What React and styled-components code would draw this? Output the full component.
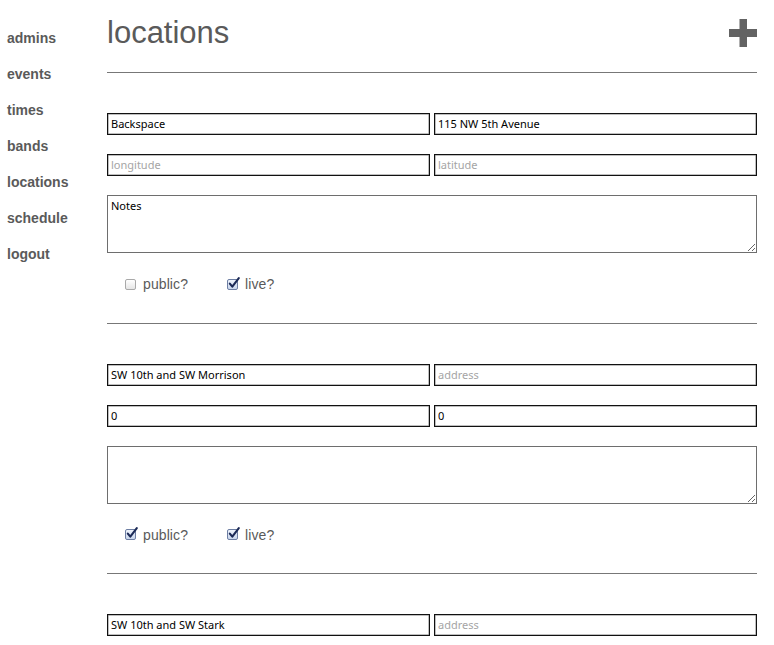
import React from "react";
import styled, { createGlobalStyle } from "styled-components";

const GlobalStyle = createGlobalStyle`
  html, body { margin: 0; padding: 0; background: #fff; }
  body { font-family: "Liberation Sans", Arial, Helvetica, sans-serif; }
  * { box-sizing: border-box; }
`;

const Page = styled.div`
  display: flex;
  align-items: flex-start;
`;

const Nav = styled.nav`
  width: 107px;
  flex: none;
  padding: 20px 0 0 7px;
  display: flex;
  flex-direction: column;
`;

const NavLink = styled.a`
  font-size: 14px;
  font-weight: bold;
  line-height: 36px;
  color: #5a5a5a;
  text-decoration: none;
`;

const Main = styled.main`
  width: 650px;
  flex: none;
`;

const Header = styled.header`
  display: flex;
  justify-content: space-between;
  align-items: flex-start;
  padding-top: 18px;
  padding-bottom: 24px;
`;

const Title = styled.h1`
  margin: 0;
  font-size: 31px;
  font-weight: normal;
  line-height: 30px;
  color: #5a5a5a;
`;

const AddButton = styled.button`
  border: 0;
  padding: 0;
  margin: 1px 0 0;
  background: none;
  width: 28px;
  height: 28px;
  display: block;
  cursor: pointer;
  svg { display: block; }
`;

const Rule = styled.hr`
  margin: 0;
  border: 0;
  border-top: 1px solid #777;
  height: 0;
`;

const Section = styled.section`
  padding: 40px 0 28.5px;
  display: flex;
  flex-direction: column;
  gap: 19px;
`;

const Pair = styled.div`
  display: grid;
  grid-template-columns: 1fr 1fr;
  gap: 4px;
`;

const Field = styled.input`
  height: 22px;
  border: 1px solid #111;
  box-shadow: inset 0 0 0 0.5px rgba(0,0,0,0.5);
  padding: 0 4px 1px 3px;
  font-family: "Noto Sans", "Open Sans", sans-serif;
  font-size: 11px;
  color: #000;
  outline: none;
  background: #fff;
  &::placeholder { color: #a5a5a5; }
`;

const Notes = styled.textarea`
  height: 58px;
  border: 1px solid #6e6e6e;
  padding: 3px 3px;
  font-family: "Noto Sans", "Open Sans", sans-serif;
  font-size: 11px;
  line-height: 14px;
  color: #000;
  resize: vertical;
  outline: none;
  &::placeholder { color: #000; }
`;

const Checks = styled.div`
  display: flex;
  align-items: center;
  gap: 39px;
  padding: 0 0 0 18px;
  height: 20px;
  margin-top: 2px;
`;

const CheckLabel = styled.label`
  display: flex;
  align-items: center;
  gap: 7px;
  font-size: 14px;
  line-height: 20px;
  color: #5a5a5a;
  letter-spacing: 0.1px;
`;

const Box = styled.span`
  width: 11px;
  height: 11px;
  flex: none;
  position: relative;
  border-radius: 2px;
  border: 1px solid ${(p) => (p.$checked ? "#6d7ea3" : "#a9a9a9")};
  background: ${(p) =>
    p.$checked
      ? "linear-gradient(#eef3fb, #c9d6ec)"
      : "linear-gradient(#ffffff, #e6e6e6)"};
  svg { position: absolute; left: 0px; top: -3px; overflow: visible; }
`;

function Checkbox({ checked, label }) {
  return (
    <CheckLabel>
      <Box $checked={checked}>
        {checked && (
          <svg width="12" height="12" viewBox="0 0 12 12">
            <path d="M1.8 6.6 L4.3 9.6 L10.8 1.2" fill="none" stroke="#1c2a57" strokeWidth="2.1" strokeLinecap="round" strokeLinejoin="round" />
          </svg>
        )}
      </Box>
      {label}
    </CheckLabel>
  );
}

const locations = [
  { name: "Backspace", address: "115 NW 5th Avenue", lng: "", lat: "", notes: "Notes", pub: false, live: true },
  { name: "SW 10th and SW Morrison", address: "", lng: "0", lat: "0", notes: "", pub: true, live: true },
  { name: "SW 10th and SW Stark", address: "", lng: "0", lat: "0", notes: "", pub: true, live: true },
];

export default function App() {
  return (
    <>
      <GlobalStyle />
      <Page>
        <Nav>
          {["admins", "events", "times", "bands", "locations", "schedule", "logout"].map((n) => (
            <NavLink key={n} href="#">{n}</NavLink>
          ))}
        </Nav>
        <Main>
          <Header>
            <Title>locations</Title>
            <AddButton aria-label="add">
              <svg width="28" height="28" viewBox="0 0 28 28">
                <rect x="0" y="10" width="28" height="8" fill="#636363" />
                <rect x="10.5" y="0" width="7.5" height="28" fill="#636363" />
              </svg>
            </AddButton>
          </Header>
          {locations.map((l, i) => (
            <React.Fragment key={i}>
              <Rule />
              <Section>
                <Pair>
                  <Field defaultValue={l.name} placeholder="name" />
                  <Field defaultValue={l.address} placeholder="address" />
                </Pair>
                <Pair>
                  <Field defaultValue={l.lng} placeholder="longitude" />
                  <Field defaultValue={l.lat} placeholder="latitude" />
                </Pair>
                <Notes defaultValue="" placeholder={l.notes} />
                <Checks>
                  <Checkbox checked={l.pub} label="public?" />
                  <Checkbox checked={l.live} label="live?" />
                </Checks>
              </Section>
            </React.Fragment>
          ))}
        </Main>
      </Page>
    </>
  );
}
